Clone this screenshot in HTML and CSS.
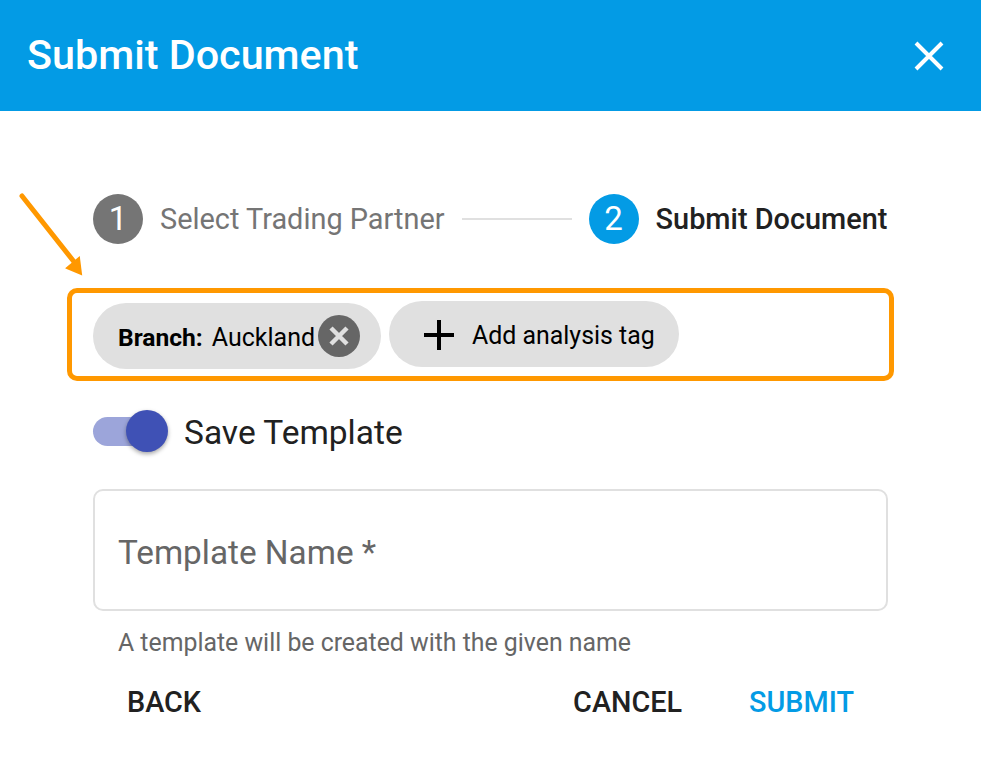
FILE: index.html
```html
<!DOCTYPE html>
<html lang="en">
<head>
    <meta charset="UTF-8">
    <title>Submit Document</title>
    <link rel="stylesheet" href="styles.css">
</head>
<body>
    <div class="header">
        <h1>Submit Document</h1>
        <svg class="close" width="32" height="32" viewBox="0 0 32 32">
            <path d="M3 3L29 29M29 3L3 29" stroke="#fff" stroke-width="4" fill="none"/>
        </svg>
    </div>

    <svg class="arrow" width="70" height="85" viewBox="0 0 70 85">
        <path d="M3 4L56 71" stroke="#ff9800" stroke-width="5" stroke-linecap="round" fill="none"/>
        <path d="M48 76L62 82L60 66Z" fill="#ff9800" stroke="#ff9800" stroke-width="2"/>
    </svg>

    <div class="content">
        <div class="steps">
            <div class="num done">1</div>
            <span class="step-text muted">Select Trading Partner</span>
            <div class="line"></div>
            <div class="num active">2</div>
            <span class="step-text current">Submit Document</span>
        </div>

        <div class="tags">
            <div class="chip branch">
                <b>Branch:</b>
                <span>Auckland</span>
                <svg class="chip-x" width="42" height="42" viewBox="0 0 42 42">
                    <circle cx="21" cy="21" r="21" fill="#666"/>
                    <path d="M13 13L29 29M29 13L13 29" stroke="#e0e0e0" stroke-width="4.5" fill="none"/>
                </svg>
            </div>
            <div class="chip add">
                <svg width="32" height="32" viewBox="0 0 32 32">
                    <path d="M16 1V31M1 16H31" stroke="#000" stroke-width="4" fill="none"/>
                </svg>
                <span>Add analysis tag</span>
            </div>
        </div>

        <div class="switch-row">
            <div class="switch"><div class="thumb"></div></div>
            <span>Save Template</span>
        </div>

        <div class="field">Template Name *</div>
        <p class="help">A template will be created with the given name</p>

        <div class="actions">
            <span class="btn">BACK</span>
            <span class="btn push">CANCEL</span>
            <span class="btn primary">SUBMIT</span>
        </div>
    </div>
</body>
</html>
```

FILE: styles.css
```css
*{
    margin: 0;
    padding: 0;
    box-sizing: border-box;
}
body{
    width: 100%;
    height: 757px;
    background: white;
    font-family: Roboto, "Liberation Sans", sans-serif;
    color: #212121;
    overflow: hidden;
    position: relative;
}
.header{
    height: 111px;
    background: #039be5;
    color: white;
    padding: 0 36px 2px 27px;
    display: flex;
    align-items: center;
    justify-content: space-between;
}
.header h1{
    font-size: 41.3px;
    font-weight: 500;
}
.close{
    margin-top: 2px;
}
.arrow{
    position: absolute;
    left: 19px;
    top: 192px;
}
.content{
    padding: 83px 93px 0;
}
.steps{
    display: flex;
    align-items: center;
    height: 50px;
}
.num{
    width: 50px;
    height: 50px;
    border-radius: 50%;
    color: white;
    font-size: 33px;
    font-weight: 400;
    text-align: center;
    line-height: 50px;
}
.done{
    background: #757575;
}
.active{
    background: #039be5;
}
.step-text{
    font-size: 28.9px;
    margin-left: 17px;
    white-space: nowrap;
}
.muted{
    color: #757575;
}
.current{
    font-weight: 500;
}
.line{
    width: 110px;
    height: 2px;
    background: #e0e0e0;
    margin: -1px 17px 0;
}
.tags{
    margin: 44px -6px 0 -26px;
    height: 93px;
    border: 5px solid #ff9800;
    border-radius: 10px;
    padding: 8px 21px;
    display: flex;
    gap: 8px;
    align-items: flex-start;
}
.chip{
    background: #e0e0e0;
    border-radius: 33px;
    height: 66px;
    display: flex;
    align-items: center;
    color: black;
    font-size: 25px;
}
.chip span,
.chip b{
    margin-top: 2px;
}
.branch{
    width: 288px;
    margin-top: 2px;
    padding-left: 25px;
}
.branch b{
    font-weight: 700;
    font-size: 24.6px;
    margin-right: 9px;
}
.chip-x{
    margin-left: 3px;
}
.add{
    width: 290px;
    padding-left: 34px;
}
.add svg{
    margin-top: 2px;
}
.add span{
    margin-left: 17px;
    font-size: 24.9px;
}
.switch-row{
    display: flex;
    align-items: center;
    margin-top: 29px;
    height: 42px;
    font-size: 33.5px;
}
.switch-row span{
    margin-top: 2px;
}
.switch{
    width: 72px;
    height: 29px;
    border-radius: 15px;
    background: #9ca5da;
    position: relative;
    margin-right: 19px;
}
.thumb{
    position: absolute;
    right: -3px;
    top: -6.5px;
    width: 42px;
    height: 42px;
    border-radius: 50%;
    background: #3f51b5;
    box-shadow: 0 2px 4px rgba(0, 0, 0, 0.35);
}
.field{
    margin-top: 37px;
    height: 122px;
    border: 2px solid #e0e0e0;
    border-radius: 10px;
    padding: 4px 0 0 23px;
    display: flex;
    align-items: center;
    font-size: 33.3px;
    color: #666;
}
.help{
    margin: 17px 0 0 25px;
    font-size: 24.85px;
    color: #666;
    line-height: 30px;
}
.actions{
    display: flex;
    margin-top: 27px;
    padding: 0 34px;
    gap: 67px;
}
.btn{
    font-size: 28.8px;
    font-weight: 500;
    line-height: 34px;
}
.push{
    margin-left: auto;
}
.primary{
    color: #039be5;
}
```
